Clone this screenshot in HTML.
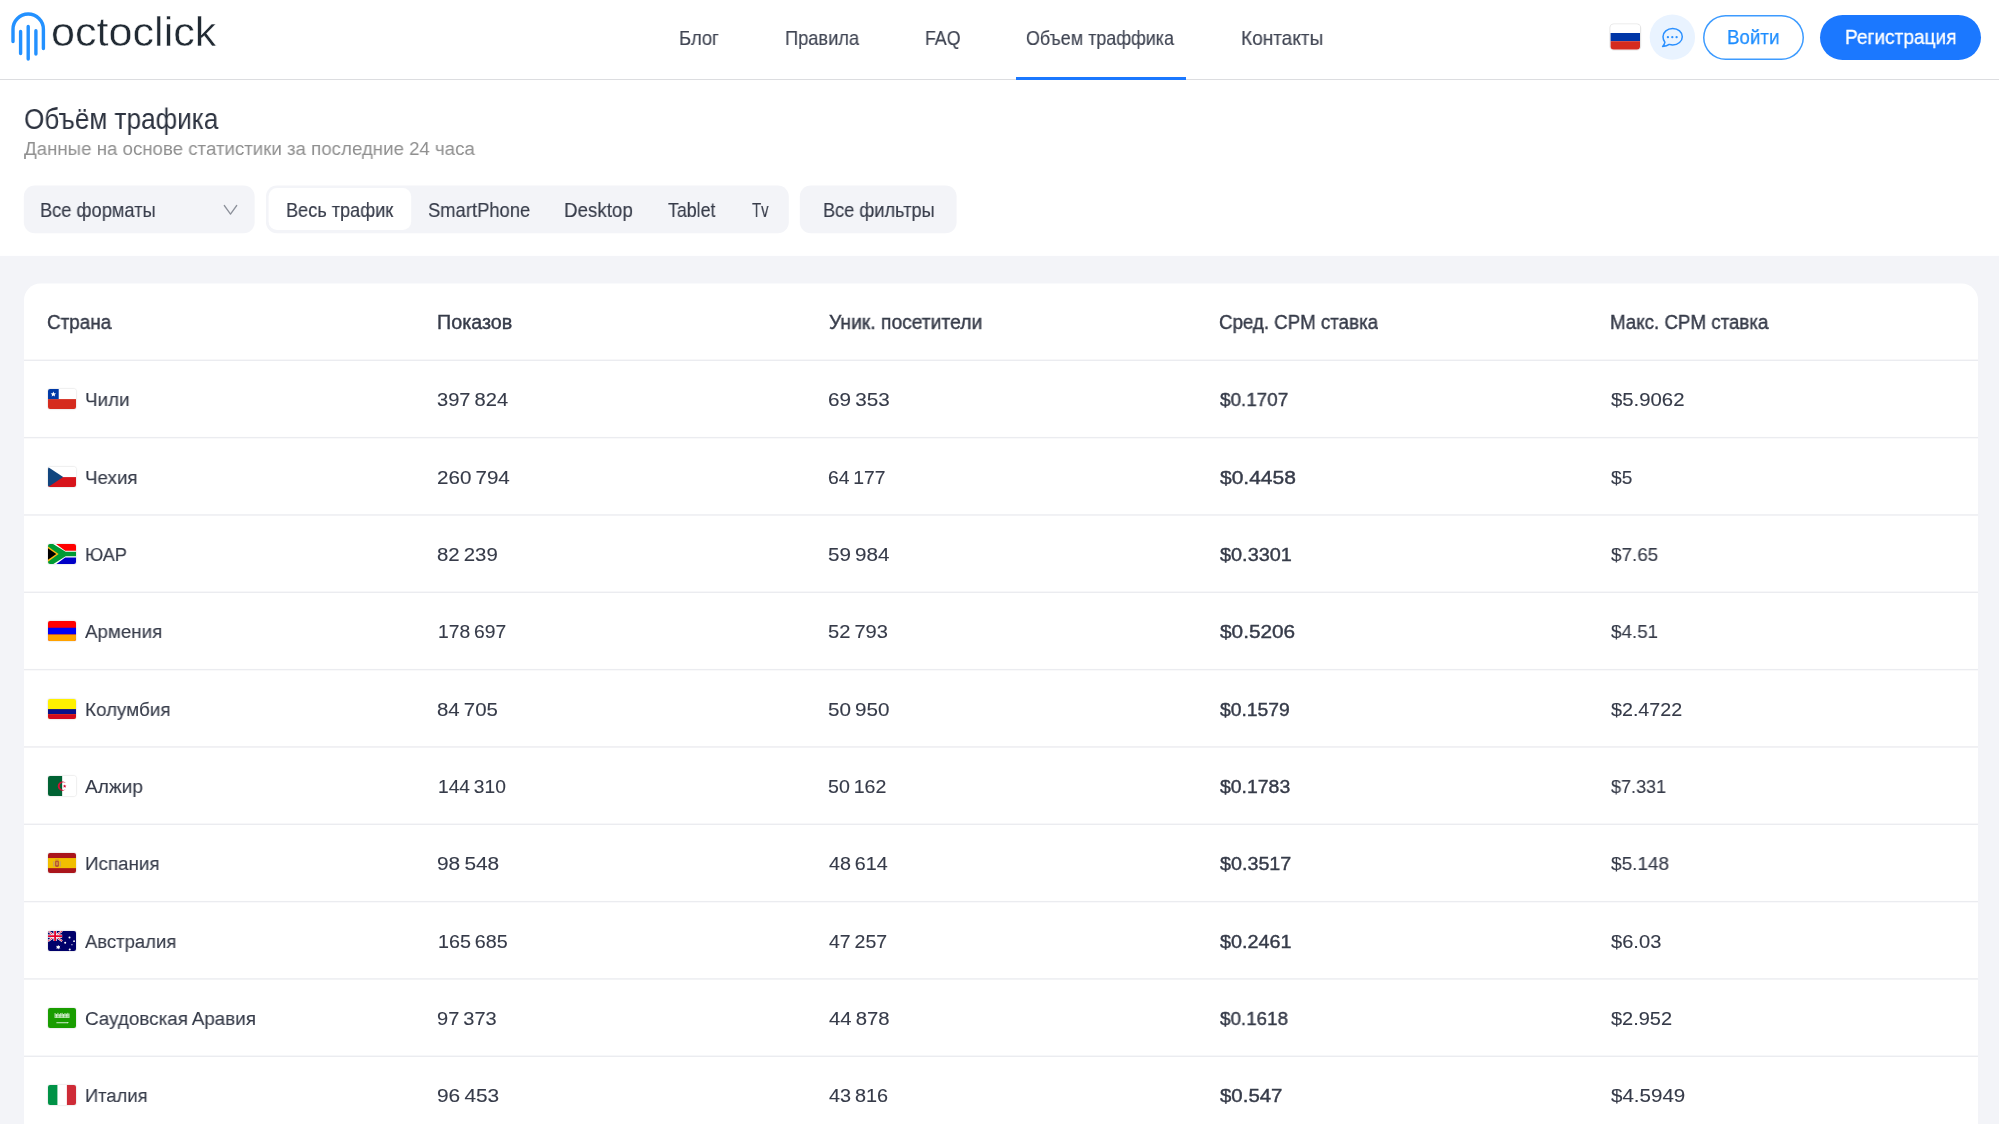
<!DOCTYPE html>
<html lang="ru">
<head>
<meta charset="utf-8">
<title>Объём трафика — octoclick</title>
<style>
*{box-sizing:border-box;margin:0;padding:0}
html,body{width:1999px;height:1124px;overflow:hidden;background:#fff}
body{font-family:"Liberation Sans",sans-serif;color:#363b49;position:relative;-webkit-font-smoothing:antialiased}
.abs{position:absolute;white-space:nowrap;line-height:1;transform-origin:0 50%;will-change:transform}
/* header */
#header{position:absolute;left:0;top:0;width:1999px;height:80px;background:#fff;border-bottom:1px solid #dcdde0}
#logo-icon{position:absolute;left:8px;top:8.3px}
.logo{color:#212a33;-webkit-text-stroke:.45px #fff}
.nav{color:#3f4452;-webkit-text-stroke:.15px #3f4452}
#nav-line{position:absolute;left:1016px;top:77px;width:170px;height:3px;background:#1b78ff}
#login{position:absolute;left:1703px;top:14.5px;width:101px;height:45px;border-radius:23px;box-shadow:inset 0 0 0 1.5px #3d9bff;background:#fff}
#reg{position:absolute;left:1820px;top:14.5px;width:160.5px;height:45px;border-radius:23px;background:#1b78ff}
.login{color:#1b8cff;-webkit-text-stroke:.25px #1b8cff}
.reg{color:#fff;-webkit-text-stroke:.3px #fff}
/* title */
.title{color:#2d3340}
.subtitle{color:#8f8f8f}
.ft{color:#363b49;-webkit-text-stroke:.15px #363b49}
/* gray */
.th{color:#363b49;-webkit-text-stroke:.4px #363b49}
.td{color:#363b49;word-spacing:-1.5px;-webkit-text-stroke:.12px #363b49}
.b{-webkit-text-stroke:.42px #363b49}
.flag{position:absolute;left:47.7px;width:28.3px;height:20.2px;border-radius:2px;overflow:hidden;box-shadow:0 0 1.5px rgba(0,0,0,.3)}
.flag svg{display:block;width:100%;height:100%}
</style>
</head>
<body>
<div id="header">
  <svg id="logo-icon" width="44" height="58" viewBox="0 0 44 58" fill="none" stroke="#2391ff" stroke-width="3.4" stroke-linecap="round">
    <path d="M5 33.5V21.2a15.2 15.2 0 0 1 30.4 0V40.5"/>
    <path d="M12.6 23.5v22M20.2 18.5v32.5M27.9 22.8v23.3"/>
  </svg>
  <div id="nav-line"></div>
  <svg style="position:absolute;left:1606px;top:20px" width="40" height="36" viewBox="0 0 40 36">
    <defs><clipPath id="rf"><rect x="4.6" y="4.6" width="29.4" height="24.8" rx="3.2"/></clipPath></defs>
    <rect x="4" y="4" width="30.6" height="26" rx="3.8" fill="none" stroke="#000" stroke-opacity=".1" stroke-width="1.2"/>
    <g clip-path="url(#rf)"><rect x="4" y="4" width="32" height="9" fill="#fff"/><rect x="4" y="13" width="32" height="8.200" fill="#0036a7"/><rect x="4" y="21.200" width="32" height="9" fill="#d52b1e"/></g>
  </svg>
  <svg style="position:absolute;left:1649px;top:14px" width="48" height="48" viewBox="0 0 48 48" fill="none">
    <circle cx="23.35" cy="23.15" r="22.7" fill="#e9f3ff"/>
    <g transform="translate(.7 1)" stroke="#2b90ff" stroke-width="1.5" stroke-linejoin="round" stroke-linecap="round">
      <path d="M23 13.5c5.4 0 9.6 3.6 9.6 8.2s-4.200 8.200-9.600 8.200c-1.200 0-2.400-.2-3.500-.5-1.600 1.300-3.900 1.900-6.600 2.100 1.300-1.300 2.100-2.700 2.300-4.300-1.200-1.500-1.900-3.400-1.900-5.500 0-4.600 4.300-8.200 9.700-8.200z"/>
      <path d="M18.200 22.200h.01M22.600 22.200h.01M26.900 22.200h.01" stroke-width="2.300"/>
    </g>
  </svg>
  <div id="login"></div>
  <div id="reg"></div>
</div>

<svg style="position:absolute;left:0;top:180px" width="1000" height="60" viewBox="0 180 1000 60">
  <rect x="23.8" y="185.45" width="230.85" height="47.75" rx="11" fill="#f3f4f8"/>
  <rect x="265.95" y="185.45" width="522.85" height="47.75" rx="11" fill="#f3f4f8"/>
  <rect x="268.6" y="188" width="142.6" height="41.9" rx="8.5" fill="#fff"/>
  <rect x="799.8" y="185.45" width="156.8" height="47.75" rx="11" fill="#f3f4f8"/>
  <path d="M224.3 205.5l6.2 8.6 6.2-8.600" fill="none" stroke="#8d919b" stroke-width="1.300" stroke-linecap="round" stroke-linejoin="round"/>
</svg>
<svg style="position:absolute;left:0;top:250px" width="1999" height="874" viewBox="0 250 1999 874">
  <rect x="0" y="255.9" width="1999" height="900" fill="#f3f4f8"/>
  <rect x="24" y="283.6" width="1954" height="900" rx="16.5" fill="#fff"/>
</svg>
<div class="abs logo" style="left:51.16px;top:13.00px;font-size:39.8px;transform:scaleX(1.0841)">octoclick</div>
<div class="abs nav" style="left:679.01px;top:28.00px;font-size:20.4px;transform:scaleX(0.9042)">Блог</div>
<div class="abs nav" style="left:784.90px;top:28.00px;font-size:20.4px;transform:scaleX(0.8948)">Правила</div>
<div class="abs nav" style="left:924.89px;top:28.00px;font-size:20.4px;transform:scaleX(0.8702)">FAQ</div>
<div class="abs nav" style="left:1026.30px;top:28.00px;font-size:20.4px;transform:scaleX(0.8792)">Объем траффика</div>
<div class="abs nav" style="left:1240.68px;top:28.00px;font-size:20.4px;transform:scaleX(0.9339)">Контакты</div>
<div class="abs login" style="left:1726.91px;top:27.00px;font-size:20.4px;transform:scaleX(0.9190)">Войти</div>
<div class="abs reg" style="left:1845.05px;top:27.00px;font-size:20.4px;transform:scaleX(0.9353)">Регистрация</div>
<div class="abs title" style="left:23.79px;top:105.00px;font-size:29.2px;transform:scaleX(0.8956)">Объём трафика</div>
<div class="abs subtitle" style="left:23.94px;top:139.00px;font-size:19.2px;transform:scaleX(0.9732)">Данные на основе статистики за последние 24 часа</div>
<div class="abs ft" style="left:39.94px;top:200.00px;font-size:20.4px;transform:scaleX(0.8954)">Все форматы</div>
<div class="abs ft" style="left:286.01px;top:200.00px;font-size:20.4px;transform:scaleX(0.8894)">Весь трафик</div>
<div class="abs ft" style="left:427.90px;top:200.00px;font-size:20.4px;transform:scaleX(0.9018)">SmartPhone</div>
<div class="abs ft" style="left:564.37px;top:200.00px;font-size:20.4px;transform:scaleX(0.9201)">Desktop</div>
<div class="abs ft" style="left:667.93px;top:200.00px;font-size:20.4px;transform:scaleX(0.8713)">Tablet</div>
<div class="abs ft" style="left:751.67px;top:200.00px;font-size:20.4px;transform:scaleX(0.7297)">Tv</div>
<div class="abs ft" style="left:822.94px;top:200.00px;font-size:20.4px;transform:scaleX(0.8917)">Все фильтры</div>
<div class="abs th" style="left:47.09px;top:313.00px;font-size:19.6px;transform:scaleX(0.9627)">Страна</div>
<div class="abs th" style="left:436.82px;top:313.00px;font-size:19.6px;transform:scaleX(1.0066)">Показов</div>
<div class="abs th" style="left:829.09px;top:313.00px;font-size:19.6px;transform:scaleX(0.9845)">Уник. посетители</div>
<div class="abs th" style="left:1219.11px;top:313.00px;font-size:19.6px;transform:scaleX(0.9547)">Сред. CPM ставка</div>
<div class="abs th" style="left:1610.08px;top:313.00px;font-size:19.6px;transform:scaleX(0.9558)">Макс. CPM ставка</div>
<div class="abs td" style="left:84.77px;top:390.00px;font-size:19.2px;transform:scaleX(0.9805)">Чили</div>
<div class="abs td" style="left:437.01px;top:390.00px;font-size:19.2px;transform:scaleX(1.0480)">397 824</div>
<div class="abs td" style="left:827.66px;top:390.00px;font-size:19.2px;transform:scaleX(1.0780)">69 353</div>
<div class="abs td b" style="left:1220.31px;top:390.00px;font-size:19.2px;transform:scaleX(0.9834)">$0.1707</div>
<div class="abs td" style="left:1610.95px;top:390.00px;font-size:19.2px;transform:scaleX(1.0593)">$5.9062</div>
<div class="abs td" style="left:84.77px;top:468.00px;font-size:19.2px;transform:scaleX(0.9782)">Чехия</div>
<div class="abs td" style="left:437.46px;top:468.00px;font-size:19.2px;transform:scaleX(1.0727)">260 794</div>
<div class="abs td" style="left:827.98px;top:468.00px;font-size:19.2px;transform:scaleX(1.0077)">64 177</div>
<div class="abs td b" style="left:1220.33px;top:468.00px;font-size:19.2px;transform:scaleX(1.0935)">$0.4458</div>
<div class="abs td" style="left:1611.00px;top:468.00px;font-size:19.2px;transform:scaleX(0.9949)">$5</div>
<div class="abs td" style="left:85.07px;top:545.00px;font-size:19.2px;transform:scaleX(0.9454)">ЮАР</div>
<div class="abs td" style="left:437.09px;top:545.00px;font-size:19.2px;transform:scaleX(1.0619)">82 239</div>
<div class="abs td" style="left:828.08px;top:545.00px;font-size:19.2px;transform:scaleX(1.0751)">59 984</div>
<div class="abs td b" style="left:1220.35px;top:545.00px;font-size:19.2px;transform:scaleX(1.0365)">$0.3301</div>
<div class="abs td" style="left:1611.00px;top:545.00px;font-size:19.2px;transform:scaleX(0.9841)">$7.65</div>
<div class="abs td" style="left:84.66px;top:622.00px;font-size:19.2px;transform:scaleX(0.9767)">Армения</div>
<div class="abs td" style="left:437.81px;top:622.00px;font-size:19.2px;transform:scaleX(1.0057)">178 697</div>
<div class="abs td" style="left:828.16px;top:622.00px;font-size:19.2px;transform:scaleX(1.0491)">52 793</div>
<div class="abs td b" style="left:1220.33px;top:622.00px;font-size:19.2px;transform:scaleX(1.0839)">$0.5206</div>
<div class="abs td" style="left:1611.00px;top:622.00px;font-size:19.2px;transform:scaleX(0.9811)">$4.51</div>
<div class="abs td" style="left:85.33px;top:700.00px;font-size:19.2px;transform:scaleX(0.9816)">Колумбия</div>
<div class="abs td" style="left:437.05px;top:700.00px;font-size:19.2px;transform:scaleX(1.0639)">84 705</div>
<div class="abs td" style="left:828.08px;top:700.00px;font-size:19.2px;transform:scaleX(1.0755)">50 950</div>
<div class="abs td b" style="left:1220.33px;top:700.00px;font-size:19.2px;transform:scaleX(1.0067)">$0.1579</div>
<div class="abs td" style="left:1610.97px;top:700.00px;font-size:19.2px;transform:scaleX(1.0250)">$2.4722</div>
<div class="abs td" style="left:84.66px;top:777.00px;font-size:19.2px;transform:scaleX(0.9958)">Алжир</div>
<div class="abs td" style="left:437.83px;top:777.00px;font-size:19.2px;transform:scaleX(0.9945)">144 310</div>
<div class="abs td" style="left:828.30px;top:777.00px;font-size:19.2px;transform:scaleX(1.0206)">50 162</div>
<div class="abs td b" style="left:1219.73px;top:777.00px;font-size:19.2px;transform:scaleX(1.0118)">$0.1783</div>
<div class="abs td" style="left:1611.01px;top:777.00px;font-size:19.2px;transform:scaleX(0.9392)">$7.331</div>
<div class="abs td" style="left:85.34px;top:854.00px;font-size:19.2px;transform:scaleX(0.9789)">Испания</div>
<div class="abs td" style="left:436.75px;top:854.00px;font-size:19.2px;transform:scaleX(1.0881)">98 548</div>
<div class="abs td" style="left:829.08px;top:854.00px;font-size:19.2px;transform:scaleX(1.0272)">48 614</div>
<div class="abs td b" style="left:1219.75px;top:854.00px;font-size:19.2px;transform:scaleX(1.0276)">$0.3517</div>
<div class="abs td" style="left:1611.00px;top:854.00px;font-size:19.2px;transform:scaleX(0.9895)">$5.148</div>
<div class="abs td" style="left:84.65px;top:932.00px;font-size:19.2px;transform:scaleX(0.9622)">Австралия</div>
<div class="abs td" style="left:437.73px;top:932.00px;font-size:19.2px;transform:scaleX(1.0286)">165 685</div>
<div class="abs td" style="left:829.10px;top:932.00px;font-size:19.2px;transform:scaleX(1.0162)">47 257</div>
<div class="abs td b" style="left:1219.74px;top:932.00px;font-size:19.2px;transform:scaleX(1.0312)">$0.2461</div>
<div class="abs td" style="left:1610.95px;top:932.00px;font-size:19.2px;transform:scaleX(1.0481)">$6.03</div>
<div class="abs td" style="left:85.06px;top:1009.00px;font-size:19.2px;transform:scaleX(0.9819)">Саудовская Аравия</div>
<div class="abs td" style="left:436.88px;top:1009.00px;font-size:19.2px;transform:scaleX(1.0434)">97 373</div>
<div class="abs td" style="left:829.07px;top:1009.00px;font-size:19.2px;transform:scaleX(1.0580)">44 878</div>
<div class="abs td b" style="left:1219.71px;top:1009.00px;font-size:19.2px;transform:scaleX(0.9802)">$0.1618</div>
<div class="abs td" style="left:1610.96px;top:1009.00px;font-size:19.2px;transform:scaleX(1.0397)">$2.952</div>
<div class="abs td" style="left:85.06px;top:1086.00px;font-size:19.2px;transform:scaleX(0.9568)">Италия</div>
<div class="abs td" style="left:436.75px;top:1086.00px;font-size:19.2px;transform:scaleX(1.0879)">96 453</div>
<div class="abs td" style="left:829.08px;top:1086.00px;font-size:19.2px;transform:scaleX(1.0336)">43 816</div>
<div class="abs td b" style="left:1219.72px;top:1086.00px;font-size:19.2px;transform:scaleX(1.0641)">$0.547</div>
<div class="abs td" style="left:1610.94px;top:1086.00px;font-size:19.2px;transform:scaleX(1.0705)">$4.5949</div>
<svg style="position:absolute;left:24px;top:283px" width="1954" height="841" fill="#ebecf0"><rect x="0" y="76.60" width="1954" height="1.4"/><rect x="0" y="153.93" width="1954" height="1.4"/><rect x="0" y="231.26" width="1954" height="1.4"/><rect x="0" y="308.59" width="1954" height="1.4"/><rect x="0" y="385.92" width="1954" height="1.4"/><rect x="0" y="463.25" width="1954" height="1.4"/><rect x="0" y="540.58" width="1954" height="1.4"/><rect x="0" y="617.91" width="1954" height="1.4"/><rect x="0" y="695.24" width="1954" height="1.4"/><rect x="0" y="772.57" width="1954" height="1.4"/></svg>
<div class="flag" style="top:389.2px"><svg viewBox="0 0 28 20"><rect width="28" height="20" fill="#fff"/><rect y="10" width="28" height="10" fill="#d52b1e"/><rect width="10.6" height="10" fill="#0039a6"/><path fill="#fff" d="M5.3 2.5l.78 1.75 1.9.17-1.44 1.25.45 1.86-1.69-1-1.69 1 .45-1.86L2.62 4.42l1.9-.17z"/></svg></div>
<div class="flag" style="top:466.5px"><svg viewBox="0 0 28 20"><rect width="28" height="20" fill="#fff"/><rect y="10" width="28" height="10" fill="#d7141a"/><path fill="#11457e" d="M0 0l15 10L0 20z"/></svg></div>
<div class="flag" style="top:543.9px"><svg viewBox="0 0 28 20"><rect width="28" height="20" fill="#fff"/><path fill="#f00" d="M8 0h20v6.700H17z"/><path fill="#0000c8" d="M8 20h20v-6.700H17z"/><path fill="#009a33" d="M0 0h5l12.500 7.800H28v4.400H17.500L5 20H0z"/><path fill="#fdb913" d="M0 2.500L10.500 10 0 17.500z"/><path fill="#000" d="M0 4.300L8.200 10 0 15.700z"/></svg></div>
<div class="flag" style="top:621.2px"><svg viewBox="0 0 28 20"><rect width="28" height="20" fill="#f00"/><rect y="6.700" width="28" height="6.700" fill="#0000f5"/><rect y="13.400" width="28" height="6.600" fill="#ffa200"/></svg></div>
<div class="flag" style="top:698.5px"><svg viewBox="0 0 28 20"><rect width="28" height="20" fill="#fff100"/><rect y="10" width="28" height="5" fill="#08108a"/><rect y="15" width="28" height="5" fill="#d2091e"/></svg></div>
<div class="flag" style="top:775.9px"><svg viewBox="0 0 28 20"><rect width="28" height="20" fill="#fff"/><rect width="14" height="20" fill="#006233"/><path fill="#d21034" d="M17.91 7.28A4.6 4.6 0 1 0 17.91 12.72A3.7 3.7 0 1 1 17.91 7.28z"/><path fill="#d21034" d="M16.5 8.3l.5 1.15 1.25.1-.95.82.3 1.23-1.1-.67-1.1.67.3-1.23-.95-.82 1.25-.1z"/></svg></div>
<div class="flag" style="top:853.2px"><svg viewBox="0 0 28 20"><rect width="28" height="20" fill="#aa151b"/><rect y="5" width="28" height="10" fill="#f1bf00"/><rect x="5" y="8.2" width="1.3" height="5.4" fill="#c9a45c"/><rect x="11.5" y="8.2" width="1.3" height="5.4" fill="#c9a45c"/><rect x="6.9" y="7.6" width="4" height="6.2" rx="1.3" fill="#b8552f"/><rect x="7.8" y="9" width="2.2" height="3" fill="#d9a441" opacity=".7"/><path fill="#c8872a" d="M7.2 7.6l.3-1.5 1.4.6 1.4-.6.3 1.500z"/></svg></div>
<div class="flag" style="top:930.5px"><svg viewBox="0 0 28 20"><rect width="28" height="20" fill="#00006a"/><g><path stroke="#fff" stroke-width="2" d="M0 0l14 10M14 0L0 10"/><path stroke="#e4002b" stroke-width=".8" d="M0 0l14 10M14 0L0 10"/><path stroke="#fff" stroke-width="3.200" d="M7 0v10M0 5h14"/><path stroke="#e4002b" stroke-width="1.800" d="M7 0v10M0 5h14"/></g><path fill="#fff" d="M10.100 13.600l.6 1.400 1.500-.300-.8 1.300.8 1.300-1.500-.300-.6 1.400-.6-1.400-1.500.300.8-1.300-.8-1.300 1.500.300z"/><circle cx="21.500" cy="18.300" r="1" fill="#fff"/><circle cx="17" cy="11.700" r="1" fill="#fff"/><circle cx="21.300" cy="6.400" r="1" fill="#fff"/><circle cx="25.800" cy="10.100" r=".9" fill="#fff"/><circle cx="23.700" cy="13.500" r=".55" fill="#fff"/></svg></div>
<div class="flag" style="top:1007.8px"><svg viewBox="0 0 28 20"><rect width="28" height="20" fill="#199d00"/><path stroke="#fff" stroke-opacity=".85" stroke-width=".9" fill="none" d="M7 5v4.500M8.400 6v3.500M9.800 4.800v4.700M11.200 6.200v3.300M12.600 5v4.500M14 4.800v4.700M15.400 6v3.500M16.800 5v4.500M18.200 5.600v3.900M19.600 4.800v4.700M20.800 5.500v4"/><path stroke="#fff" stroke-opacity=".7" stroke-width=".8" d="M6.600 9.300h14.600M7 7h13.500"/><path stroke="#fff" stroke-width=".8" d="M8.300 14.600h11.500"/><path fill="#fff" d="M19.300 14l1.500.6-1.500.6z"/></svg></div>
<div class="flag" style="top:1085.2px"><svg viewBox="0 0 28 20"><rect width="28" height="20" fill="#fff"/><rect width="9.300" height="20" fill="#009246"/><rect x="18.700" width="9.300" height="20" fill="#ce2b37"/></svg></div>
</body>
</html>
